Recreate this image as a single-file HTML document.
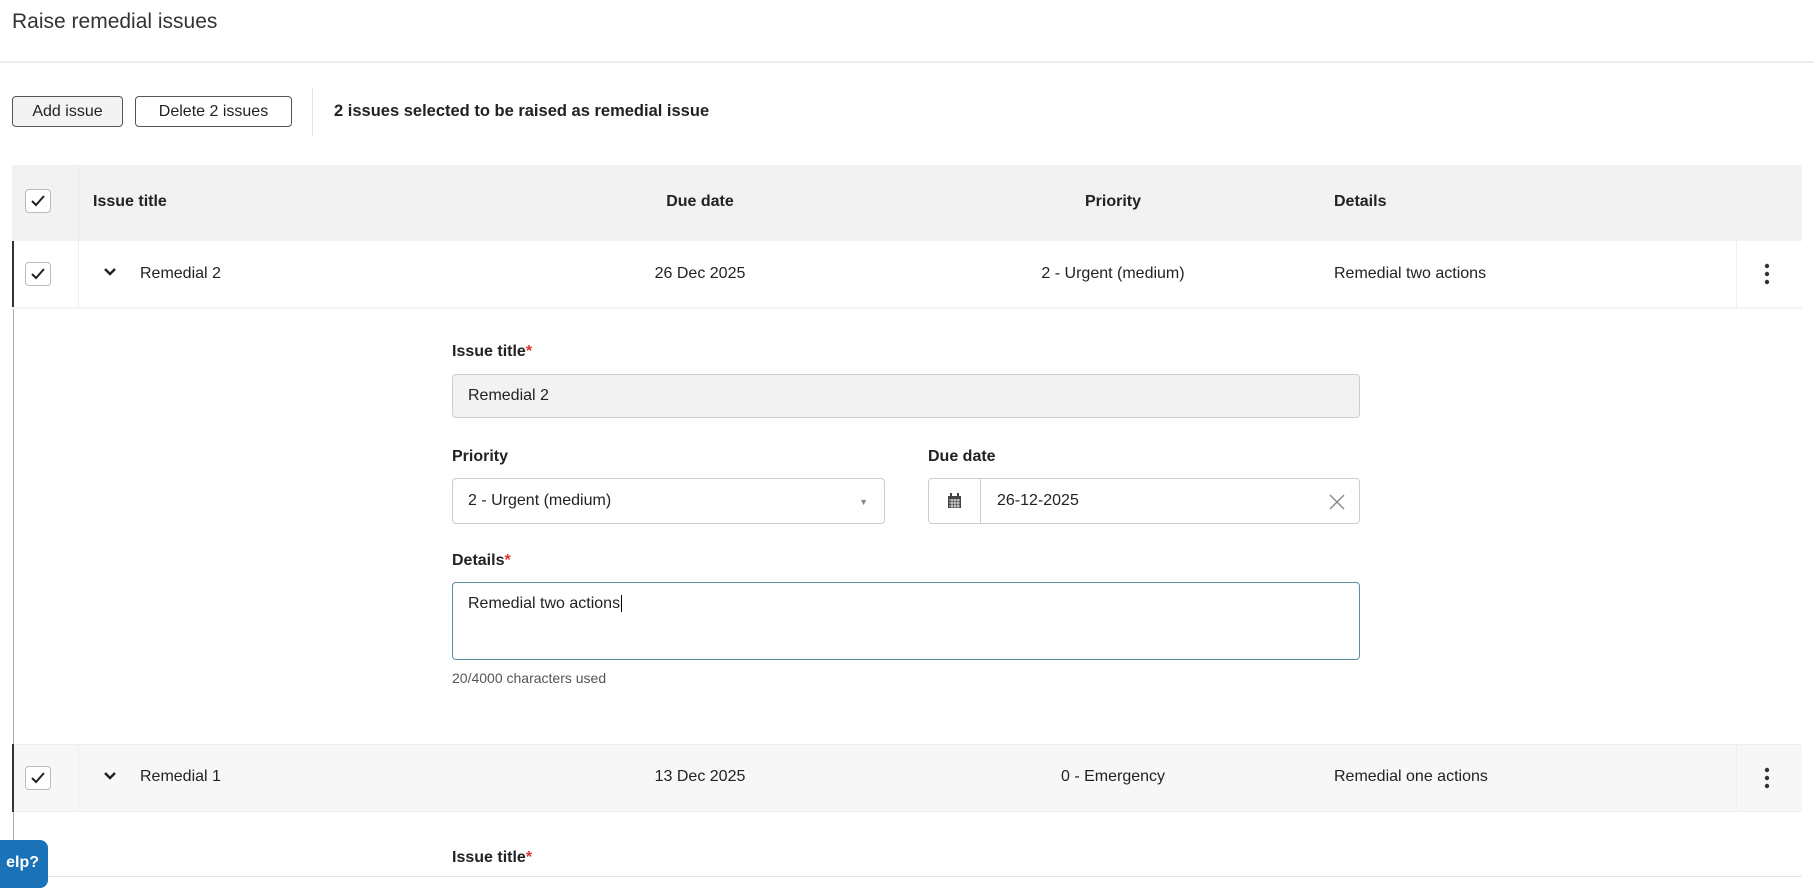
<!DOCTYPE html>
<html><head><meta charset="utf-8"><style>
*{box-sizing:border-box;margin:0;padding:0}
body{width:1814px;height:888px;overflow:hidden;background:#fff;font-family:"Liberation Sans",sans-serif;color:#222;position:relative;font-size:16px}
.a{position:absolute}
.cb{position:absolute;width:26px;height:24px;border:1px solid #bbb;border-radius:4px;background:#fff}
.cb svg{position:absolute;left:5px;top:5px}
.btn{position:absolute;height:31px;border:1px solid #555;border-radius:4px;font-size:16px;line-height:29px;text-align:center;background:#fff}
.lbl{position:absolute;font-weight:bold;font-size:16px}
.lbl span{color:#d33}
.inp{position:absolute;border:1px solid #ccc;border-radius:4px;font-size:16px;padding-left:15px}
</style></head><body>
<div class="a" style="left:12px;top:10px;font-size:21px;color:#333">Raise remedial issues</div>
<div class="a" style="left:0;top:61px;width:1814px;height:2px;background:#eee"></div>

<div class="btn" style="left:12px;top:96px;width:111px;background:#f3f3f3">Add issue</div>
<div class="btn" style="left:135px;top:96px;width:157px">Delete 2 issues</div>
<div class="a" style="left:312px;top:88px;width:1px;height:48px;background:#e4e4e4"></div>
<div class="a" style="left:334px;top:102px;font-weight:bold;font-size:16.5px">2 issues selected to be raised as remedial issue</div>

<div class="a" style="left:12px;top:165px;width:1790px;height:76px;background:#f2f2f2"></div>
<div class="cb" style="left:25px;top:189px"><svg width="14" height="12"><path d="M1 6l4 4 8-9" stroke="#222" stroke-width="2" fill="none"/></svg></div>
<div class="a" style="left:78px;top:165px;width:1px;height:76px;background:#e8e8e8"></div>
<div class="a" style="left:93px;top:193px;font-weight:bold">Issue title</div>
<div class="a" style="left:600px;top:193px;width:200px;text-align:center;font-weight:bold">Due date</div>
<div class="a" style="left:1013px;top:193px;width:200px;text-align:center;font-weight:bold">Priority</div>
<div class="a" style="left:1334px;top:193px;font-weight:bold">Details</div>

<div class="a" style="left:12px;top:241px;width:2px;height:66px;background:#333"></div>
<div class="a" style="left:13px;top:307px;width:1px;height:437px;background:#aaa"></div>
<div class="cb" style="left:25px;top:262px"><svg width="14" height="12"><path d="M1 6l4 4 8-9" stroke="#222" stroke-width="2" fill="none"/></svg></div>
<div class="a" style="left:78px;top:241px;width:1px;height:66px;background:#eee"></div>
<svg class="a" style="left:104px;top:268px" width="12" height="9"><path d="M1 1l5 5 5-5" stroke="#222" stroke-width="2.4" fill="none"/></svg>
<div class="a" style="left:140px;top:265px">Remedial 2</div>
<div class="a" style="left:600px;top:265px;width:200px;text-align:center">26 Dec 2025</div>
<div class="a" style="left:1013px;top:265px;width:200px;text-align:center">2 - Urgent (medium)</div>
<div class="a" style="left:1334px;top:265px">Remedial two actions</div>
<div class="a" style="left:1736px;top:241px;width:1px;height:66px;background:#eee"></div>
<svg class="a" style="left:1764px;top:263px" width="6" height="22"><circle cx="3" cy="3" r="2.2" fill="#333"/><circle cx="3" cy="11" r="2.2" fill="#333"/><circle cx="3" cy="19" r="2.2" fill="#333"/></svg>
<div class="a" style="left:12px;top:307px;width:1790px;height:2px;background:#f4f4f4"></div>

<div class="lbl" style="left:452px;top:343px">Issue title<span>*</span></div>
<div class="inp" style="left:452px;top:374px;width:908px;height:44px;background:#f2f2f2;line-height:42px">Remedial 2</div>
<div class="lbl" style="left:452px;top:448px">Priority</div>
<div class="inp" style="left:452px;top:478px;width:433px;height:46px;line-height:44px">2 - Urgent (medium)<span style="position:absolute;right:16px;top:1px;font-size:9px;color:#888">▼</span></div>
<div class="lbl" style="left:928px;top:448px">Due date</div>
<div class="inp" style="left:928px;top:478px;width:432px;height:46px;line-height:44px;padding-left:0">
<div style="position:absolute;left:0;top:0;width:52px;height:44px;border-right:1px solid #ccc"></div>
<svg style="position:absolute;left:18px;top:14px" width="15" height="16"><rect x="1" y="3" width="13" height="12" fill="#444"/><rect x="3" y="0" width="2" height="4" fill="#444"/><rect x="10" y="0" width="2" height="4" fill="#444"/><path d="M2 7h11M2 10h11M2 13h11M5 6v9M8 6v9M11 6v9" stroke="#fff" stroke-width=".8"/></svg>
<span style="position:absolute;left:68px">26-12-2025</span>
<svg style="position:absolute;right:14px;top:15px" width="16" height="16"><path d="M1 1l14 14M15 1L1 15" stroke="#888" stroke-width="1.4"/></svg>
</div>
<div class="lbl" style="left:452px;top:552px">Details<span>*</span></div>
<div class="inp" style="left:452px;top:582px;width:908px;height:78px;border:1.5px solid #5a8fa8;padding-top:12px">Remedial two actions<span style="border-left:1px solid #000;margin-left:1px"></span></div>
<div class="a" style="left:452px;top:670px;font-size:14px;color:#555">20/4000 characters used</div>

<div class="a" style="left:12px;top:744px;width:1790px;height:68px;background:#f7f7f7;border-top:1px solid #eee;border-bottom:1px solid #eee"></div>
<div class="a" style="left:12px;top:744px;width:2px;height:68px;background:#333"></div>
<div class="cb" style="left:25px;top:766px"><svg width="14" height="12"><path d="M1 6l4 4 8-9" stroke="#222" stroke-width="2" fill="none"/></svg></div>
<div class="a" style="left:78px;top:744px;width:1px;height:68px;background:#eee"></div>
<svg class="a" style="left:104px;top:772px" width="12" height="9"><path d="M1 1l5 5 5-5" stroke="#222" stroke-width="2.4" fill="none"/></svg>
<div class="a" style="left:140px;top:768px">Remedial 1</div>
<div class="a" style="left:600px;top:768px;width:200px;text-align:center">13 Dec 2025</div>
<div class="a" style="left:1013px;top:768px;width:200px;text-align:center">0 - Emergency</div>
<div class="a" style="left:1334px;top:768px">Remedial one actions</div>
<div class="a" style="left:1736px;top:744px;width:1px;height:68px;background:#eee"></div>
<svg class="a" style="left:1764px;top:767px" width="6" height="22"><circle cx="3" cy="3" r="2.2" fill="#333"/><circle cx="3" cy="11" r="2.2" fill="#333"/><circle cx="3" cy="19" r="2.2" fill="#333"/></svg>
<div class="a" style="left:13px;top:812px;width:1px;height:76px;background:#aaa"></div>
<div class="lbl" style="left:452px;top:849px">Issue title<span>*</span></div>
<div class="a" style="left:40px;top:876px;width:1762px;height:1px;background:#e4e4e4"></div>
<div class="a" style="left:0;top:840px;width:48px;height:48px;background:#1a73b8;border-radius:0 8px 8px 0;overflow:hidden">
<span style="position:absolute;right:9px;top:14px;color:#fff;font-weight:bold;font-size:16px;white-space:nowrap">elp?</span></div>
</body></html>
